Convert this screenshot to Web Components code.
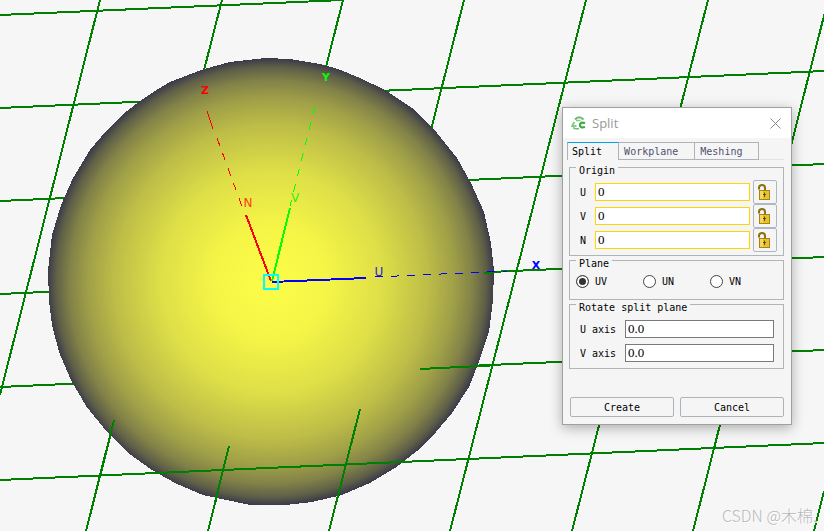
<!DOCTYPE html>
<html lang="en">
<head>
<meta charset="UTF-8">
<meta name="viewport" content="width=device-width, initial-scale=1">
<title>Split</title>
<style>
    body {
        margin: 0;
        background: #f6f6f6;
        color: #000;
        font: 10px "DejaVu Sans Mono", "Liberation Mono", monospace;
    }
    tool-dialog {
        position: absolute;
        top: 107px;
        right: 32px;
    }
</style>
</head>
<body>
<model-view watermark="CSDN @木棉."></model-view>

<tool-dialog heading="Split">
    <tab-strip tabs="Split,Workplane,Meshing"></tab-strip>
    <field-group legend="Origin">
        <lock-field label="U" value="0"></lock-field>
        <lock-field label="V" value="0"></lock-field>
        <lock-field label="N" value="0"></lock-field>
    </field-group>
    <field-group legend="Plane">
        <radio-row name="plane" options="UV,UN,VN"></radio-row>
    </field-group>
    <field-group legend="Rotate split plane">
        <axis-field label="U axis" value="0.0"></axis-field>
        <axis-field label="V axis" value="0.0"></axis-field>
    </field-group>
    <push-button slot="actions">Create</push-button>
    <push-button slot="actions">Cancel</push-button>
</tool-dialog>

<script>
// 3D viewport: workplane grid, sphere and axes
class ModelView extends HTMLElement {
    connectedCallback() {
        this.attachShadow({ mode: "open" }).innerHTML = `
            <style>
                :host {
                    display: block;
                    position: relative;
                    height: 100vh;
                    overflow: hidden;
                }
                svg {
                    display: block;
                    width: 100%;
                    height: 100%;
                }
                .lines {
                    fill: none;
                    stroke-width: 2;
                    shape-rendering: crispEdges;
                }
                .grid { stroke: #008000; }
                .thin { stroke-width: 1; }
                .dash { stroke-width: 1; stroke-dasharray: 8 8; }
                text {
                    font: 12px "DejaVu Sans", sans-serif;
                    text-anchor: middle;
                }
                .world {
                    font-size: 11px;
                    font-weight: bold;
                }
                .mark {
                    position: absolute;
                    right: 7px;
                    bottom: 4px;
                    color: #b8b8b8;
                    font: 300 16px/24px "Noto Sans CJK SC", sans-serif;
                    text-shadow: 1px 1px #fff;
                }
            </style>
            <svg viewBox="0 0 824 531" preserveAspectRatio="xMidYMid slice" role="img" aria-label="Sphere on workplane grid">
                <defs>
                    <radialGradient id="shade" gradientUnits="userSpaceOnUse" cx="271" cy="282" r="224">
                        <stop offset="0" stop-color="#fcfc48"/>
                        <stop offset=".25" stop-color="#f5f547"/>
                        <stop offset=".5" stop-color="#dede48"/>
                        <stop offset=".7" stop-color="#bdbd48"/>
                        <stop offset=".82" stop-color="#9f9f48"/>
                        <stop offset=".9" stop-color="#828248"/>
                        <stop offset=".96" stop-color="#5f5f48"/>
                        <stop offset="1" stop-color="#38384a"/>
                    </radialGradient>
                </defs>
                <path class="lines grid" d="M100 0L0 395M222 0L86 531M343 0L208 531M464 0L329 531M586 0L450 531M708 0L572 531M828 0L693 531M824 491L814 531
                    M0 15L343 0M0 108L824 71M0 201L824 164M0 294L824 257M0 387L824 350"/>
                <path fill="url(#shade)" shape-rendering="crispEdges" d="M265 58L290 59L320 64L338 69L360 78L385 90L415 110L437 133L457 158L471 183L484 212L491 243L494 270L493 300L489 332L480 359L469 387L452 413L436 432L417 451L395 468L370 483L342 495L312 502L285 505L250 505L203 495L175 483L152 470L128 453L107 432L86 406L71 380L59 352L52 325L49 301L48 270L52 235L61 205L73 178L90 150L106 131L122 115L140 101L155 91L170 82L188 75L204 69L230 62Z"/>
                <path class="lines grid" d="M114 420L86 531M229 446L208 531M360 409L329 531M420 369L500 365M484 273L500 272M0 480L824 443"/>
                <g class="lines">
                    <path stroke="#f00" d="M246 215L271 281"/>
                    <path class="thin" stroke="#f00" d="M207 111L213 129"/>
                    <path class="dash" stroke="#f00" d="M217 138L244 212"/>
                    <path stroke="#0f0" d="M290 208L272 281"/>
                    <path class="thin" stroke="#0f0" d="M315 107L313 114"/>
                    <path class="dash" stroke="#0f0" d="M311 122L290 206"/>
                    <path stroke="#00f" d="M272 282L366 278"/>
                    <path class="dash" stroke="#00f" d="M375 277L507 271"/>
                    <path stroke="#0ff" d="M264 275H278V289H264Z"/>
                </g>
                <text class="world" x="205" y="94" fill="#f00">Z</text>
                <text x="248" y="207" fill="#ff4018">N</text>
                <text class="world" x="326" y="81" fill="#0f0">Y</text>
                <text x="295" y="202" fill="#30f018">V</text>
                <text x="379" y="276" fill="#2828d0">U</text>
                <text class="world" x="536" y="269" fill="#00f">X</text>
            </svg>
            <div class="mark">${this.getAttribute("watermark")}</div>
        `;
    }
}
customElements.define("model-view", ModelView);

// Floating tool window
class ToolDialog extends HTMLElement {
    connectedCallback() {
        this.attachShadow({ mode: "open" }).innerHTML = `
            <style>
                :host {
                    display: block;
                    box-sizing: border-box;
                    width: 230px;
                    border: 1px solid #a0a0a0;
                    background: #f5f5f5;
                    box-shadow: 0 3px 12px rgba(0, 0, 0, .3);
                }
                header {
                    display: flex;
                    align-items: center;
                    gap: 5px;
                    height: 30px;
                    padding: 0 10px 0 8px;
                    background: #fff;
                }
                h1 {
                    flex: 1;
                    margin: 0;
                    color: #999;
                    font: 13px/16px "Open Sans", "Noto Sans", sans-serif;
                }
                header button {
                    display: flex;
                    padding: 0;
                    border: 0;
                    background: none;
                }
                .content { padding: 4px 7px 0 4px; }
                footer {
                    display: flex;
                    gap: 6px;
                    padding: 28px 7px 7px;
                }
            </style>
            <header>
                <svg width="16" height="16" viewBox="0 0 16 16" fill="none" stroke="#43a948" aria-hidden="true">
                    <path d="M4 4.500Q8 0 12.500 4.500" stroke="#6dbd70" stroke-width="2.200"/>
                    <path d="M5 5.500H9.500" stroke="#86c98a" stroke-width="1.500"/>
                    <path d="M3.200 7L1.200 11H5.500" stroke="#86c98a" stroke-width="2"/>
                    <path d="M2 12.500Q4 14.500 8 13.500" stroke="#6dbd70" stroke-width="1.500"/>
                    <path d="M14 8.200Q9 6.500 9 10Q9 13.500 14 12" stroke-width="2.300"/>
                </svg>
                <h1>${this.getAttribute("heading")}</h1>
                <button type="button" aria-label="Close">
                    <svg width="11" height="11" viewBox="0 0 11 11" stroke="#888"><path d="M.5 .5L10.500 10.500M10.500 .5L.5 10.500"/></svg>
                </button>
            </header>
            <div class="content"><slot></slot></div>
            <footer><slot name="actions"></slot></footer>
        `;
    }
}
customElements.define("tool-dialog", ToolDialog);

class TabStrip extends HTMLElement {
    connectedCallback() {
        const tabs = this.getAttribute("tabs").split(",");
        this.attachShadow({ mode: "open" }).innerHTML = `
            <style>
                :host {
                    display: flex;
                    height: 18px;
                    margin-bottom: 3px;
                    box-shadow: inset 0 -1px #e0e4e7;
                }
                button {
                    padding: 0 16px 0 5px;
                    border: 1px solid #acb3b9;
                    border-left-width: 0;
                    background: #f5f5f5;
                    color: #505070;
                    font: inherit;
                }
                button[aria-selected="true"] {
                    padding-left: 4px;
                    border-left-width: 1px;
                    border-top: 1px solid #00a2e8;
                    border-bottom: 0;
                    color: #000;
                }
            </style>
            ${tabs.map((tab, i) => `<button type="button" role="tab" aria-selected="${i === 0}">${tab}</button>`).join("")}
        `;
        this.setAttribute("role", "tablist");
    }
}
customElements.define("tab-strip", TabStrip);

class FieldGroup extends HTMLElement {
    connectedCallback() {
        this.attachShadow({ mode: "open" }).innerHTML = `
            <style>
                :host {
                    display: block;
                    margin: -2px 0 0 2px;
                }
                fieldset {
                    min-width: 0;
                    margin: 0;
                    padding: 7px 6px 3px;
                    border: 1px solid #b0b5b9;
                }
                /* the caption hangs a little below the frame line */
                legend {
                    padding: 8px 3px 0;
                    line-height: 4px;
                }
            </style>
            <fieldset>
                <legend>${this.getAttribute("legend")}</legend>
                <slot></slot>
            </fieldset>
        `;
    }
}
customElements.define("field-group", FieldGroup);

// Coordinate with a button that locks it
class LockField extends HTMLElement {
    connectedCallback() {
        this.attachShadow({ mode: "open" }).innerHTML = `
            <style>
                :host {
                    display: flex;
                    align-items: center;
                    height: 24px;
                    padding-left: 4px;
                }
                label { width: 15px; }
                input {
                    flex: 1;
                    box-sizing: border-box;
                    min-width: 0;
                    height: 18px;
                    margin-right: 3px;
                    padding: 0 2px;
                    border: 1px solid #ffd700;
                    background: #fff;
                    font: 13px "Liberation Serif", serif;
                }
                button {
                    display: flex;
                    align-items: center;
                    justify-content: center;
                    width: 24px;
                    height: 24px;
                    padding: 0;
                    border: 1px solid #b0b8bf;
                    border-radius: 2px;
                    background: #f5f5f5;
                }
            </style>
            <label for="value">${this.getAttribute("label")}</label>
            <input id="value" type="text" value="${this.getAttribute("value")}">
            <button type="button" aria-label="Lock ${this.getAttribute("label")}">
                <svg width="16" height="16" viewBox="0 0 16 16">
                    <path d="M2 5.500V3.500Q2.500 1 5 1Q8 1 8 4V7" fill="none" stroke="#8a7010" stroke-width="2"/>
                    <rect x="2.500" y="6.500" width="10" height="9" fill="#e5c12f" stroke="#a88510"/>
                    <path d="M3 7H6V15H3Z" fill="#f1d75c"/>
                    <path d="M7.500 8.500V13M6 10.500H9" stroke="#5c4a08"/>
                </svg>
            </button>
        `;
    }
}
customElements.define("lock-field", LockField);

class AxisField extends HTMLElement {
    connectedCallback() {
        this.attachShadow({ mode: "open" }).innerHTML = `
            <style>
                :host {
                    display: flex;
                    align-items: center;
                    height: 24px;
                    padding: 0 3px 0 4px;
                }
                label { width: 45px; }
                input {
                    flex: 1;
                    box-sizing: border-box;
                    min-width: 0;
                    height: 18px;
                    padding: 0 2px;
                    border: 1px solid #7a7a7a;
                    background: #fff;
                    font: 13px "Liberation Serif", serif;
                }
            </style>
            <label for="value">${this.getAttribute("label")}</label>
            <input id="value" type="text" value="${this.getAttribute("value")}">
        `;
    }
}
customElements.define("axis-field", AxisField);

class RadioRow extends HTMLElement {
    connectedCallback() {
        const name = this.getAttribute("name");
        const options = this.getAttribute("options").split(",");
        this.attachShadow({ mode: "open" }).innerHTML = `
            <style>
                :host {
                    display: grid;
                    grid-template-columns: repeat(3, 67px);
                    height: 16px;
                    margin-bottom: 7px;
                }
                label {
                    display: flex;
                    align-items: center;
                    gap: 6px;
                }
                input {
                    appearance: none;
                    box-sizing: border-box;
                    width: 13px;
                    height: 13px;
                    margin: 0;
                    border: 1px solid #444;
                    border-radius: 50%;
                    background: #fff;
                }
                input:checked {
                    background: #333;
                    box-shadow: inset 0 0 0 2px #fff;
                }
            </style>
            ${options.map((option, i) => `
                <label><input type="radio" name="${name}"${i === 0 ? " checked" : ""}>${option}</label>
            `).join("")}
        `;
    }
}
customElements.define("radio-row", RadioRow);

class PushButton extends HTMLElement {
    connectedCallback() {
        this.attachShadow({ mode: "open" }).innerHTML = `
            <style>
                :host {
                    display: block;
                    flex: 1;
                }
                button {
                    width: 100%;
                    height: 20px;
                    padding: 0;
                    border: 1px solid #acb3b9;
                    border-radius: 2px;
                    background: #f5f5f5;
                    color: #000;
                    font: inherit;
                }
            </style>
            <button type="button"><slot></slot></button>
        `;
    }
}
customElements.define("push-button", PushButton);
</script>
</body>
</html>
